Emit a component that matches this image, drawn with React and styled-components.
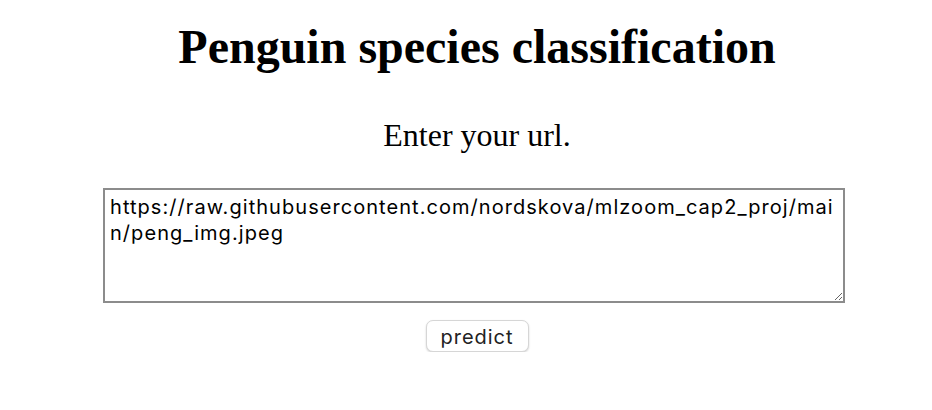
import React from "react";
import styled, { createGlobalStyle } from "styled-components";

const Global = createGlobalStyle`
  html, body { margin: 0; padding: 0; background: #fff; }
  body { font-family: "Liberation Serif", "Times New Roman", serif; color: #000; }
`;

const Page = styled.main`
  display: flex;
  flex-direction: column;
  align-items: center;
  padding: 19px 0 0 22px;
`;

const Title = styled.h1`
  margin: 0;
  font-size: 48px;
  font-weight: 700;
  line-height: 56px;
`;

const Prompt = styled.p`
  margin: 41px 0 0;
  font-size: 32px;
  line-height: 38px;
`;

const UrlBox = styled.textarea`
  box-sizing: border-box;
  margin: 34px 6px 0 0;
  width: 742px;
  height: 115px;
  padding: 4px 5px;
  border: 2px solid #8c8c8c;
  border-radius: 0;
  font-family: Inter, "Liberation Sans", Arial, sans-serif;
  font-size: 20px;
  letter-spacing: 1.05px;
  line-height: 26px;
  color: #000;
  background: #fff;
  resize: both;
  outline: none;
`;

const PredictButton = styled.button`
  box-sizing: border-box;
  margin-top: 17px;
  width: 103px;
  height: 32px;
  background: #fff;
  border: 1px solid #d6d6d6;
  border-radius: 7px;
  box-shadow: 0 1px 2px rgba(0, 0, 0, 0.18);
  font-family: Inter, "Liberation Sans", Arial, sans-serif;
  font-size: 20px;
  letter-spacing: 0.95px;
  color: #222;
  padding: 2px 0 0;
`;

export default function App() {
  return (
    <>
      <Global />
      <Page>
        <Title>Penguin species classification</Title>
        <Prompt>Enter your url.</Prompt>
        <UrlBox defaultValue="https://raw.githubusercontent.com/nordskova/mlzoom_cap2_proj/main/peng_img.jpeg" />
        <PredictButton>predict</PredictButton>
      </Page>
    </>
  );
}
